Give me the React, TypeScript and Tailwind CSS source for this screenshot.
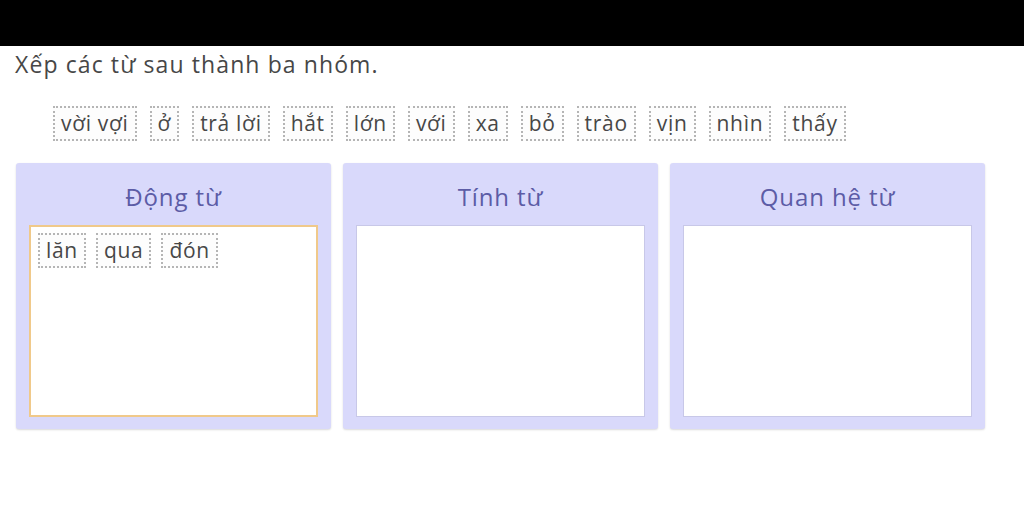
import React from "react";

const words = ["vời vợi", "ở", "trả lời", "hắt", "lớn", "với", "xa", "bỏ", "trào", "vịn", "nhìn", "thấy"];

function Chip({ text }: { text: string }) {
  return (
    <div className="h-[35px] px-[6px] flex items-center border-2 border-dotted border-[#b5b5b5] bg-[#fdfdfd] text-[21px] tracking-[0.7px] leading-none text-[#474747]">
      {text}
    </div>
  );
}

function Panel({ title, children, active }: { title: string; children?: React.ReactNode; active?: boolean }) {
  return (
    <div className="w-[315px] h-[266px] bg-[#d9d9fb] rounded-[3px] shadow-[0_1px_2px_rgba(0,0,0,0.15)] px-[13px] pb-[12px] flex flex-col">
      <div className="h-[62px] pt-[6px] flex items-center justify-center text-[24px] tracking-[0.9px] text-[#5c5ca6]">{title}</div>
      <div
        className={
          "flex-1 bg-white flex flex-wrap content-start gap-[10px] px-[7px] pt-[6px] " +
          (active ? "border-2 border-[#f0c98a]" : "border border-[#c8c8e8]")
        }
      >
        {children}
      </div>
    </div>
  );
}

export default function App() {
  return (
    <div className="w-[1024px] h-[510px] bg-white font-['Open_Sans',sans-serif] text-[#474747] overflow-hidden">
      <div className="h-[46px] bg-black" />
      <div className="pl-[15px] pt-[3px] text-[23px] tracking-[1.1px] leading-[30px]">Xếp các từ sau thành ba nhóm.</div>
      <div className="flex gap-[13px] pl-[53px] mt-[27px]">
        {words.map((w) => (
          <Chip key={w} text={w} />
        ))}
      </div>
      <div className="flex gap-[12px] pl-[16px] mt-[22px]">
        <Panel title="Động từ" active>
          <Chip text="lăn" />
          <Chip text="qua" />
          <Chip text="đón" />
        </Panel>
        <Panel title="Tính từ" />
        <Panel title="Quan hệ từ" />
      </div>
    </div>
  );
}
